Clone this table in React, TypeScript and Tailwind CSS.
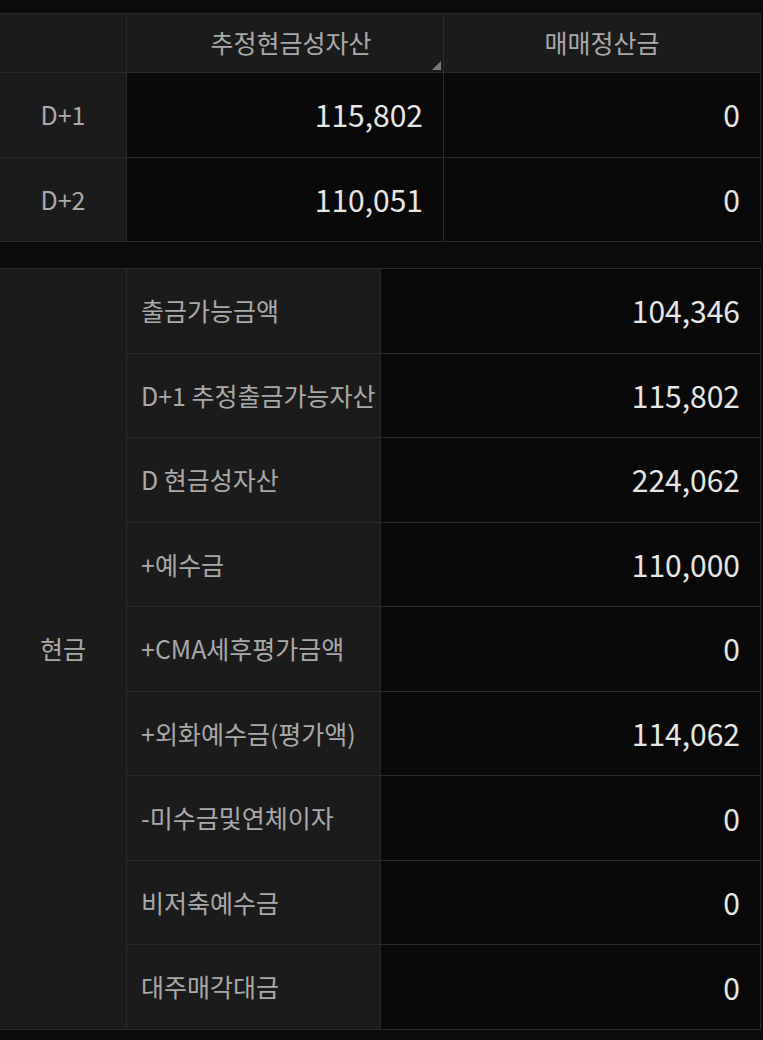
const font = { fontFamily: '"Noto Sans CJK KR", "Noto Sans", sans-serif' };

const settle = [
  { day: "D+1", cash: "115,802", trade: "0" },
  { day: "D+2", cash: "110,051", trade: "0" },
];

const cashRows = [
  { label: "출금가능금액", value: "104,346" },
  { label: "D+1 추정출금가능자산", value: "115,802" },
  { label: "D 현금성자산", value: "224,062" },
  { label: "+예수금", value: "110,000" },
  { label: "+CMA세후평가금액", value: "0" },
  { label: "+외화예수금(평가액)", value: "114,062" },
  { label: "-미수금및연체이자", value: "0" },
  { label: "비저축예수금", value: "0" },
  { label: "대주매각대금", value: "0" },
];

export default function App() {
  return (
    <div className="min-h-[1040px] w-[763px] bg-[#0b0b0b] pt-[13px] text-[25px]" style={font}>
      {/* D+1 / D+2 settlement table */}
      <div className="grid w-[761px] grid-cols-[126px_1fr_1fr] grid-rows-[58px_83.5px_83.5px] gap-px border-y border-r border-[#2a2a2a] bg-[#2a2a2a]">
        <div className="bg-[#1b1b1b]" />
        <div className="relative flex items-center justify-center bg-[#1b1b1b] pl-3 text-[#a9a9a9]">
          추정현금성자산
          <span className="absolute bottom-[2px] right-[2px] h-0 w-0 border-b-[9px] border-l-[9px] border-b-[#7a7a7a] border-l-transparent" />
        </div>
        <div className="flex items-center justify-center bg-[#1b1b1b] text-[#a9a9a9]">매매정산금</div>
        {settle.map((r) => (
          <>
            <div key={r.day} className="flex items-center justify-center bg-[#1b1b1b] text-[#a9a9a9]">
              {r.day}
            </div>
            <div className="flex items-center justify-end bg-[#090909] pr-5 text-[30px] text-[#e6e6e6]">{r.cash}</div>
            <div className="flex items-center justify-end bg-[#090909] pr-5 text-[30px] text-[#e6e6e6]">{r.trade}</div>
          </>
        ))}
      </div>

      {/* Cash breakdown */}
      <div className="mt-[26px] flex h-[762px] w-[761px] gap-px border-y border-r border-[#2a2a2a] bg-[#2a2a2a]">
        <div className="flex w-[126px] shrink-0 items-center justify-center bg-[#1b1b1b] text-[#a9a9a9]">현금</div>
        <div className="grid flex-1 grid-cols-[253px_1fr] grid-rows-9 gap-px">
          {cashRows.map((r) => (
            <>
              <div key={r.label} className="flex items-center bg-[#1b1b1b] pl-[14px] text-[#a9a9a9]">
                {r.label}
              </div>
              <div className="flex items-center justify-end bg-[#090909] pr-5 text-[30px] text-[#e6e6e6]">{r.value}</div>
            </>
          ))}
        </div>
      </div>
    </div>
  );
}
